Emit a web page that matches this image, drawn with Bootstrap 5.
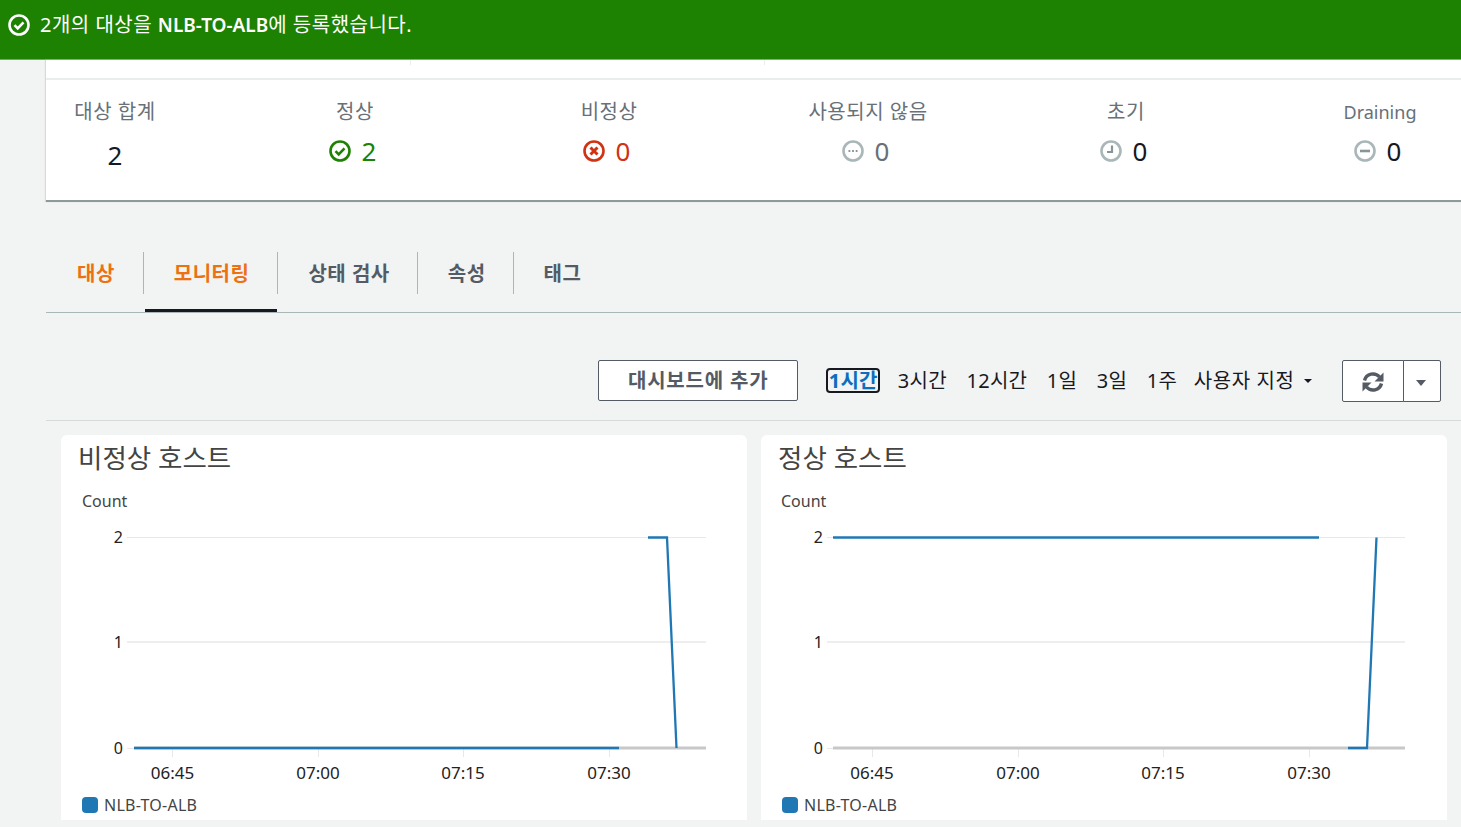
<!DOCTYPE html>
<html lang="ko">
<head>
  <meta charset="UTF-8" />
  <meta name="viewport" content="width=device-width, initial-scale=1">
  <title>NLB-TO-ALB</title>
  <link href="https://cdn.jsdelivr.net/npm/bootstrap@5.3.0/dist/css/bootstrap.min.css" rel="stylesheet"/>
  <style>
    html, body {
      height: 827px;
      overflow: hidden;
    }
    body {
      background-color: #f2f3f3;
      font-family: "Noto Sans", "Noto Sans CJK KR", sans-serif;
      color: #16191f;
    }
    .flash-bar {
      height: 60px;
      background-color: #1d8102;
      border-bottom: 1px solid #7f9a86;
      color: #fff;
      font-size: 20px;
      letter-spacing: .5px;
      padding: 0 8px 10px;
      gap: 10px;
    }
    .flash-bar strong { font-size: 19px; font-weight: 600; letter-spacing: 0; }
    .summary-box {
      margin-left: 46px;
      margin-right: -100px;
      height: 142px;
      background: #fff;
      border-bottom: 2px solid #8d9a9b;
      box-shadow: -1px 0 1px #d5dbdb;
    }
    .cut-row {
      height: 20px;
      border-bottom: 2px solid #eaeded;
    }
    .cut-row div {
      height: 5px;
      border-right: 1px solid #eaeded;
    }
    .cut-a { width: 365px; }
    .cut-b { width: 354px; }
    .count-grid {
      display: grid;
      grid-template-columns: 138px 342px 166px 352px 164px 344px;
      padding-top: 17px;
      text-align: center;
    }
    .count-label {
      font-size: 20px;
      letter-spacing: .5px;
      line-height: 30px;
      color: #687078;
    }
    .label-latin { font-size: 18px; letter-spacing: 0; }
    .count-num {
      font-size: 26px;
      line-height: 36px;
      margin-top: 6px;
      padding-right: 5px;
      gap: 11px;
    }
    .count-total { margin-top: 10px; padding-right: 0; }
    .tone-good { color: #1d8102; }
    .tone-bad { color: #d13212; }
    .tone-off { color: #687078; }
    .tab-strip {
      margin: 50px 0 0 46px;
      height: 61px;
      border-bottom: 1px solid #aab7b8;
    }
    .tab-item {
      height: 42px;
      padding: 0 28px 0 30px;
      font-size: 20px;
      letter-spacing: .5px;
      font-weight: 700;
      line-height: 44px;
      color: #545b64;
      border-right: 1px solid #aab7b8;
      position: relative;
      white-space: nowrap;
    }
    .tab-item:first-child { padding-left: 31px; }
    .tab-item:nth-child(3), .tab-item:nth-child(4) { padding-right: 27px; }
    .tab-item:last-child { border-right: 0; }
    .tab-on { color: #ec7211; }
    .tab-line::after {
      content: "";
      position: absolute;
      left: 1px;
      right: 0;
      top: 57px;
      height: 3px;
      background: #16191f;
    }
    .tool-row {
      margin-left: 46px;
      height: 108px;
      padding: 47px 20px 0 0;
      border-bottom: 1px solid #d5dbdb;
    }
    .add-btn {
      width: 200px;
      height: 41px;
      padding: 0;
      background: #fff;
      border: 1px solid #545b64;
      border-radius: 2px;
      font-size: 20px;
      letter-spacing: .8px;
      font-weight: 700;
      color: #545b64;
      line-height: 36px;
    }
    .range-list {
      margin-left: 28px;
      gap: 19.500px;
      font-size: 20px;
      letter-spacing: .3px;
      height: 41px;
    }
    .range-on {
      margin: 0 -2px 0 0;
      padding: 0 .5px;
      border: 2px solid #16191f;
      border-radius: 4px;
      color: #0d6ebd;
      font-weight: 700;
      line-height: 21px;
    }
    .range-custom { margin-left: -3px; letter-spacing: .6px; }
    .range-caret {
      width: 0;
      height: 0;
      margin-left: -10px;
      border: 4px solid transparent;
      border-top: 4px solid #16191f;
      border-bottom: 0;
    }
    .refresh-group { margin-left: 30px; }
    .refresh-group .btn {
      height: 42px;
      background: #fff;
      border-color: #545b64;
      border-radius: 2px;
      padding: 0;
      color: #545b64;
    }
    .btn-wide { width: 62px; }
    .btn-narrow { width: 38px; }
    .caret-grey {
      display: inline-block;
      vertical-align: middle;
      margin-right: 2px;
      border: 5px solid transparent;
      border-top: 6px solid #545b64;
      border-bottom: 0;
    }
    .chart-row {
      padding: 14px 14px 0 61px;
      gap: 14px;
    }
    .chart-box {
      width: 686px;
      height: 385px;
      background: #fff;
      border-radius: 6px 6px 0 0;
      overflow: hidden;
    }
    .chart-title {
      margin: 0;
      height: 45px;
      padding-left: 17px;
      font-size: 26.500px;
      font-weight: 400;
      line-height: 46px;
      color: #444;
    }
    .chart-box svg { display: block; }
    .chart-box text {
      font-family: "Noto Sans", sans-serif;
      font-size: 16px;
      fill: #222;
    }
    .chart-box text.axis-name { fill: #444; }
    .chart-box text.time-tick { font-size: 17px; }
    .chart-key {
      margin: 9px 0 0 21px;
      gap: 6px;
      font-size: 16px;
      letter-spacing: .25px;
      line-height: 20px;
      color: #444;
    }
    .key-dot {
      width: 16px;
      height: 16px;
      border-radius: 4px;
      background: #1f77b4;
    }
  </style>
</head>
<body>
  <div class="flash-bar d-flex align-items-center">
    <svg width="22" height="22" viewBox="0 0 22 22" fill="none" stroke="#fff" stroke-width="2.600"><circle cx="11" cy="11" r="9.500"/><path d="M6.500 11.200l3.200 3.200 5.800-6" stroke-width="2.600"/></svg>
    <span>2개의 대상을 <strong>NLB-TO-ALB</strong>에 등록했습니다.</span>
  </div>

  <div class="summary-box">
    <div class="cut-row d-flex"><div class="cut-a"></div><div class="cut-b"></div></div>
    <div class="count-grid">
      <div>
        <div class="count-label">대상 합계</div>
        <div class="count-num count-total">2</div>
      </div>
      <div>
        <div class="count-label">정상</div>
        <div class="count-num d-flex justify-content-center align-items-center tone-good">
          <svg width="22" height="22" viewBox="0 0 22 22" fill="none" stroke="#1d8102" stroke-width="2.600"><circle cx="11" cy="11" r="9.500"/><path d="M6.500 11.200l3.200 3.200 5.800-6" stroke-width="2.600"/></svg>2
        </div>
      </div>
      <div>
        <div class="count-label">비정상</div>
        <div class="count-num d-flex justify-content-center align-items-center tone-bad">
          <svg width="22" height="22" viewBox="0 0 22 22" fill="none" stroke="#d13212" stroke-width="2.600"><circle cx="11" cy="11" r="9.500"/><path d="M7.500 7.500l7 7M14.500 7.500l-7 7" stroke-width="3"/></svg>0
        </div>
      </div>
      <div>
        <div class="count-label">사용되지 않음</div>
        <div class="count-num d-flex justify-content-center align-items-center tone-off">
          <svg width="22" height="22" viewBox="0 0 22 22" fill="none" stroke="#aab7b8" stroke-width="2.600"><circle cx="11" cy="11" r="9.500"/><path d="M6.500 11h1.800M10.100 11h1.800M13.700 11h1.800" stroke="#879596" stroke-width="2.200"/></svg>0
        </div>
      </div>
      <div>
        <div class="count-label">초기</div>
        <div class="count-num d-flex justify-content-center align-items-center">
          <svg width="22" height="22" viewBox="0 0 22 22" fill="none" stroke="#aab7b8" stroke-width="2.600"><circle cx="11" cy="11" r="9.500"/><path d="M12 5.500v6.500H7" stroke="#879596" stroke-width="2.200"/></svg>0
        </div>
      </div>
      <div>
        <div class="count-label label-latin">Draining</div>
        <div class="count-num d-flex justify-content-center align-items-center">
          <svg width="22" height="22" viewBox="0 0 22 22" fill="none" stroke="#aab7b8" stroke-width="2.600"><circle cx="11" cy="11" r="9.500"/><path d="M6 11h10" stroke="#879596" stroke-width="2.600"/></svg>0
        </div>
      </div>
    </div>
  </div>

  <div class="tab-strip d-flex">
    <div class="tab-item tab-on">대상</div>
    <div class="tab-item tab-on tab-line">모니터링</div>
    <div class="tab-item">상태 검사</div>
    <div class="tab-item">속성</div>
    <div class="tab-item">태그</div>
  </div>

  <div class="tool-row d-flex justify-content-end align-items-start">
    <button type="button" class="btn add-btn">대시보드에 추가</button>
    <div class="range-list d-flex align-items-center">
      <span class="range-on">1시간</span>
      <span>3시간</span>
      <span>12시간</span>
      <span>1일</span>
      <span>3일</span>
      <span>1주</span>
      <span class="range-custom">사용자 지정</span>
      <span class="range-caret"></span>
    </div>
    <div class="btn-group refresh-group">
      <button type="button" class="btn btn-wide" aria-label="refresh">
        <svg width="24" height="24" viewBox="0 0 24 24" fill="none" stroke="#545b64" stroke-width="3.400"><path d="M3.500 10.500A8.700 8.700 0 0 1 18.500 7"/><path d="M20.500 13.500A8.700 8.700 0 0 1 5.500 17"/><path d="M22.500 2.500v9h-9z" fill="#545b64" stroke="none"/><path d="M1.500 21.500v-9h9z" fill="#545b64" stroke="none"/></svg>
      </button>
      <button type="button" class="btn btn-narrow" aria-label="options"><span class="caret-grey"></span></button>
    </div>
  </div>

  <div class="chart-row d-flex">
    <div class="chart-box">
      <h3 class="chart-title">비정상 호스트</h3>
      <svg width="686" height="306" viewBox="0 0 686 306">
        <text class="axis-name" x="21" y="27">Count</text>
        <path d="M66 57.500H645" stroke="#e8e8e8" fill="none"/>
        <path d="M66 162H645" stroke="#eeeeee" stroke-width="2" fill="none"/>
        <path d="M66 268.500H73M111.500 268v9M257.500 268v9M402.500 268v9M548.500 268v9" stroke="#e8e8e8" fill="none"/>
        <path d="M73 268H645" stroke="#c8c8c8" stroke-width="3" fill="none"/>
        <g text-anchor="end"><text x="62" y="63">2</text><text x="62" y="168">1</text><text x="62" y="274">0</text></g>
        <g text-anchor="middle"><text class="time-tick" x="111.500" y="299">06:45</text><text class="time-tick" x="257" y="299">07:00</text><text class="time-tick" x="402" y="299">07:15</text><text class="time-tick" x="548" y="299">07:30</text></g>
        <path d="M73 268H558" stroke="#1f77b4" stroke-width="2.500" fill="none"/>
        <path d="M587 57.500H606L615.500 268" stroke="#1f77b4" stroke-width="2.300" fill="none"/>
      </svg>
      <div class="chart-key d-flex align-items-center"><span class="key-dot"></span>NLB-TO-ALB</div>
    </div>
    <div class="chart-box">
      <h3 class="chart-title">정상 호스트</h3>
      <svg width="686" height="306" viewBox="0 0 686 306">
        <text class="axis-name" x="20" y="27">Count</text>
        <path d="M66 57.500H644" stroke="#e8e8e8" fill="none"/>
        <path d="M66 162H644" stroke="#eeeeee" stroke-width="2" fill="none"/>
        <path d="M66 268.500H72M111.500 268v9M257.500 268v9M402.500 268v9M548.500 268v9" stroke="#e8e8e8" fill="none"/>
        <path d="M72 268H644" stroke="#c8c8c8" stroke-width="3" fill="none"/>
        <g text-anchor="end"><text x="62" y="63">2</text><text x="62" y="168">1</text><text x="62" y="274">0</text></g>
        <g text-anchor="middle"><text class="time-tick" x="111" y="299">06:45</text><text class="time-tick" x="257" y="299">07:00</text><text class="time-tick" x="402" y="299">07:15</text><text class="time-tick" x="548" y="299">07:30</text></g>
        <path d="M72 57.500H558" stroke="#1f77b4" stroke-width="2.300" fill="none"/>
        <path d="M587 268H606L615.500 57.500" stroke="#1f77b4" stroke-width="2.300" fill="none"/>
      </svg>
      <div class="chart-key d-flex align-items-center"><span class="key-dot"></span>NLB-TO-ALB</div>
    </div>
  </div>

  <script src="https://cdn.jsdelivr.net/npm/bootstrap@5.3.0/dist/js/bootstrap.bundle.min.js"></script>
</body>
</html>
